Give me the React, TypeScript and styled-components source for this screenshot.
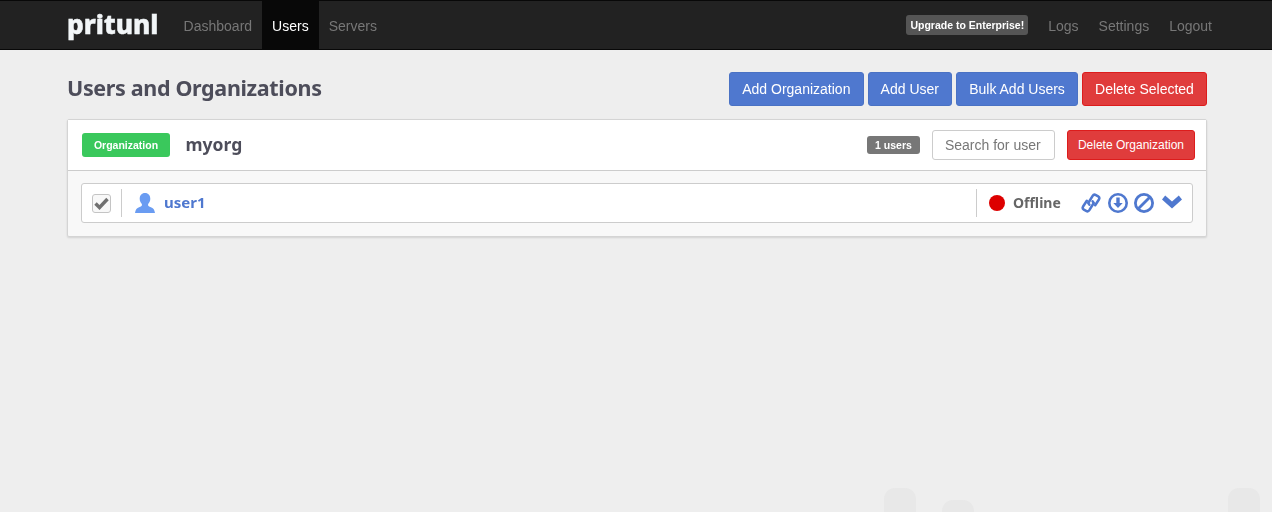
import React from 'react'
import styled, { createGlobalStyle } from 'styled-components'

const GlobalStyle = createGlobalStyle`
  html, body {
    margin: 0;
    height: 100%;
  }
  body {
    background: #eeeeee;
    font-family: "Liberation Sans", Arial, sans-serif;
    font-size: 14px;
    color: #333;
    overflow: hidden;
  }
  * {
    box-sizing: border-box;
  }
`

const heading = `"Noto Sans", "Open Sans", sans-serif`

const Navbar = styled.nav`
  height: 50px;
  background: #222222;
  border-top: 1px solid #080808;
  border-bottom: 1px solid #080808;
`

const NavInner = styled.div`
  width: 1170px;
  height: 48px;
  margin-left: 52px;
  padding-left: 15px;
  display: flex;
  align-items: stretch;
`

const Brand = styled.a`
  width: 106.6px;
  font-family: ${heading};
  font-weight: 800;
  font-size: 26.3px;
  line-height: 46px;
  color: #f2f6f8;
  -webkit-text-stroke: 0.5px #f2f6f8;
`

const NavLink = styled.a<{ $active?: boolean }>`
  padding: 0 10px;
  line-height: 51px;
  color: ${(p) => (p.$active ? '#ffffff' : '#777777')};
  background: ${(p) => (p.$active ? '#080808' : 'transparent')};
`

const NavRight = styled.div`
  margin-left: auto;
  display: flex;
  align-items: stretch;
`

const Upgrade = styled.span`
  align-self: center;
  margin-right: 10px;
  height: 20px;
  padding: 0 4px;
  border-radius: 3px;
  background: #555555;
  color: #ffffff;
  font-size: 10.5px;
  font-weight: 700;
  line-height: 20px;
`

const Page = styled.main`
  width: 1140px;
  margin-left: 67px;
`

const Toolbar = styled.div`
  display: flex;
  align-items: flex-start;
  justify-content: space-between;
  padding-top: 22px;
  height: 69px;
`

const Title = styled.h1`
  margin: 0;
  font-family: ${heading};
  font-size: 21.5px;
  letter-spacing: -0.35px;
  line-height: 31px;
  font-weight: 700;
  color: #4d4d5a;
`

const Buttons = styled.div`
  display: flex;
  gap: 4px;
`

const Button = styled.button<{ $danger?: boolean; $small?: boolean }>`
  height: ${(p) => (p.$small ? '30px' : '34px')};
  padding: 0 ${(p) => (p.$small ? '10px' : '12.1px')};
  font-family: inherit;
  font-size: ${(p) => (p.$small ? '12px' : '14px')};
  color: #ffffff;
  border-radius: 3px;
  border: 1px solid ${(p) => (p.$danger ? '#dd1c1c' : '#4a72c4')};
  background: ${(p) => (p.$danger ? '#e03c3c' : '#4f78cf')};
`

const Panel = styled.section`
  background: #f8f8f8;
  border: 1px solid #d4d4d4;
  border-radius: 2px;
  box-shadow: 0 1px 2px rgba(0, 0, 0, 0.12);
`

const PanelHead = styled.header`
  height: 51px;
  padding: 0 11px 0 14px;
  display: flex;
  align-items: center;
  background: #ffffff;
  border-bottom: 1px solid #cccccc;
`

const OrgLabel = styled.span`
  width: 88px;
  height: 24px;
  border-radius: 3px;
  background: #3ac85c;
  color: #ffffff;
  font-size: 10.5px;
  font-weight: 700;
  line-height: 24px;
  text-align: center;
`

const OrgName = styled.span`
  margin: -2px 0 0 15.5px;
  font-family: ${heading};
  font-size: 17.5px;
  font-weight: 700;
  color: #4d4d5a;
`

const Count = styled.span`
  margin-left: auto;
  width: 53px;
  height: 18px;
  border-radius: 3px;
  background: #777777;
  color: #ffffff;
  font-size: 10.5px;
  font-weight: 700;
  line-height: 18px;
  text-align: center;
`

const Search = styled.input`
  width: 123px;
  height: 30px;
  margin: 0 12px;
  padding: 0 12px;
  border: 1px solid #cccccc;
  border-radius: 3px;
  background: #ffffff;
  font-family: inherit;
  font-size: 14px;
  &::placeholder {
    color: #777777;
    opacity: 1;
  }
`

const PanelBody = styled.div`
  padding: 12px 13px 13px;
`

const UserRow = styled.div`
  height: 40px;
  display: flex;
  align-items: center;
  background: #ffffff;
  border: 1px solid #cccccc;
  border-radius: 3px;
`

const SelectCell = styled.div`
  width: 40px;
  height: 28px;
  padding-left: 10px;
  display: flex;
  align-items: center;
  border-right: 1px solid #cccccc;
`

const CheckBox = styled.span`
  width: 19px;
  height: 19px;
  display: flex;
  align-items: center;
  justify-content: center;
  border: 1px solid #c4c4c4;
  border-radius: 3px;
  background: #f8f8f8;
`

const UserName = styled.a`
  margin: -2px 0 0 9px;
  font-family: ${heading};
  font-size: 15px;
  font-weight: 700;
  color: #4f78cf;
`

const StatusCell = styled.div`
  margin-left: auto;
  width: 105px;
  height: 28px;
  padding-left: 12px;
  display: flex;
  align-items: center;
  gap: 8px;
  border-left: 1px solid #cccccc;
`

const StatusDot = styled.span`
  width: 16px;
  height: 16px;
  border-radius: 50%;
  background: #dd0000;
`

const StatusText = styled.span`
  margin-top: -2px;
  font-family: ${heading};
  font-size: 14px;
  font-weight: 700;
  color: #666666;
`

const Actions = styled.div`
  width: 111px;
  display: flex;
  align-items: center;
  gap: 6.5px;
`

const Watermark = styled.div`
  position: fixed;
  left: 0;
  right: 0;
  bottom: 0;
  height: 24px;
  z-index: -1;
`

const Bump = styled.span<{ $x: number; $top: number }>`
  position: absolute;
  left: ${(p) => p.$x}px;
  top: ${(p) => p.$top}px;
  bottom: 0;
  width: 32px;
  border-radius: 11px 11px 0 0;
  background: #e8e8e8;
`

const UserIcon = () => (
  <svg width="20" height="20" viewBox="0 0 20 20" style={{ marginLeft: 13 }}>
    <path
      fill="#6a9cf2"
      d="M10 0c3.400 0 5.300 2.600 5.300 5.800 0 2.300-1 4.100-2.200 5.100v1.300c0 .9 1 1.300 2.800 2 2.200.9 3.600 2.100 4.100 5.800H0c.5-3.700 1.900-4.900 4.100-5.800 1.800-.7 2.800-1.100 2.800-2v-1.300C5.700 9.900 4.700 8.100 4.700 5.800 4.700 2.600 6.600 0 10 0z"
    />
  </svg>
)

const CheckIcon = () => (
  <svg width="15" height="13" viewBox="0 0 15 13">
    <path fill="none" stroke="#707070" strokeWidth="3.400" d="M1.500 6.500l4 4 8-8.500" />
  </svg>
)

const LinkIcon = () => (
  <svg width="20" height="22" viewBox="0 0 18 20">
    <g fill="none" stroke="#4f78cf" strokeWidth="2.300" strokeLinecap="round" strokeLinejoin="round">
      <path d="M7.500 11.500L6.500 10L10.500 3.500Q11.600 1.800 13.500 2.800L15.500 3.900Q17.200 5 16.200 6.800L12.800 12" />
      <path d="M10.500 8.500L11.500 10L7.500 16.500Q6.400 18.200 4.500 17.200L2.500 16.100Q.8 15 1.800 13.200L5.200 8" />
    </g>
  </svg>
)

const DownloadIcon = () => (
  <svg width="20" height="20" viewBox="0 0 20 20">
    <circle cx="10" cy="10" r="8.700" fill="none" stroke="#4f78cf" strokeWidth="2.600" />
    <path fill="#4f78cf" d="M8.300 4.500h3.400v5.500h3l-4.700 5-4.700-5h3z" />
  </svg>
)

const BanIcon = () => (
  <svg width="20" height="20" viewBox="0 0 20 20">
    <circle cx="10" cy="10" r="8.600" fill="none" stroke="#4f78cf" strokeWidth="2.800" />
    <path stroke="#4f78cf" strokeWidth="2.800" d="M4 16L16 4" />
  </svg>
)

const ChevronIcon = () => (
  <svg width="20" height="14" viewBox="0 0 20 14" style={{ marginTop: -2, marginLeft: 1 }}>
    <path fill="#4f78cf" d="M0 4.500L3.200.5 10 6.500 16.800.5 20 4.500 10 13.500z" />
  </svg>
)

export default function App() {
  return (
    <>
      <GlobalStyle />
      <Navbar>
        <NavInner>
          <Brand>pritunl</Brand>
          <NavLink>Dashboard</NavLink>
          <NavLink $active>Users</NavLink>
          <NavLink>Servers</NavLink>
          <NavRight>
            <Upgrade>Upgrade to Enterprise!</Upgrade>
            <NavLink>Logs</NavLink>
            <NavLink>Settings</NavLink>
            <NavLink>Logout</NavLink>
          </NavRight>
        </NavInner>
      </Navbar>
      <Page>
        <Toolbar>
          <Title>Users and Organizations</Title>
          <Buttons>
            <Button>Add Organization</Button>
            <Button>Add User</Button>
            <Button>Bulk Add Users</Button>
            <Button $danger>Delete Selected</Button>
          </Buttons>
        </Toolbar>
        <Panel>
          <PanelHead>
            <OrgLabel>Organization</OrgLabel>
            <OrgName>myorg</OrgName>
            <Count>1 users</Count>
            <Search placeholder="Search for user" />
            <Button $danger $small>Delete Organization</Button>
          </PanelHead>
          <PanelBody>
            <UserRow>
              <SelectCell>
                <CheckBox><CheckIcon /></CheckBox>
              </SelectCell>
              <UserIcon />
              <UserName>user1</UserName>
              <StatusCell>
                <StatusDot />
                <StatusText>Offline</StatusText>
              </StatusCell>
              <Actions>
                <LinkIcon />
                <DownloadIcon />
                <BanIcon />
                <ChevronIcon />
              </Actions>
            </UserRow>
          </PanelBody>
        </Panel>
      </Page>
      <Watermark>
        <Bump $x={884} $top={0} />
        <Bump $x={942} $top={12} />
        <Bump $x={1228} $top={0} />
      </Watermark>
    </>
  )
}
